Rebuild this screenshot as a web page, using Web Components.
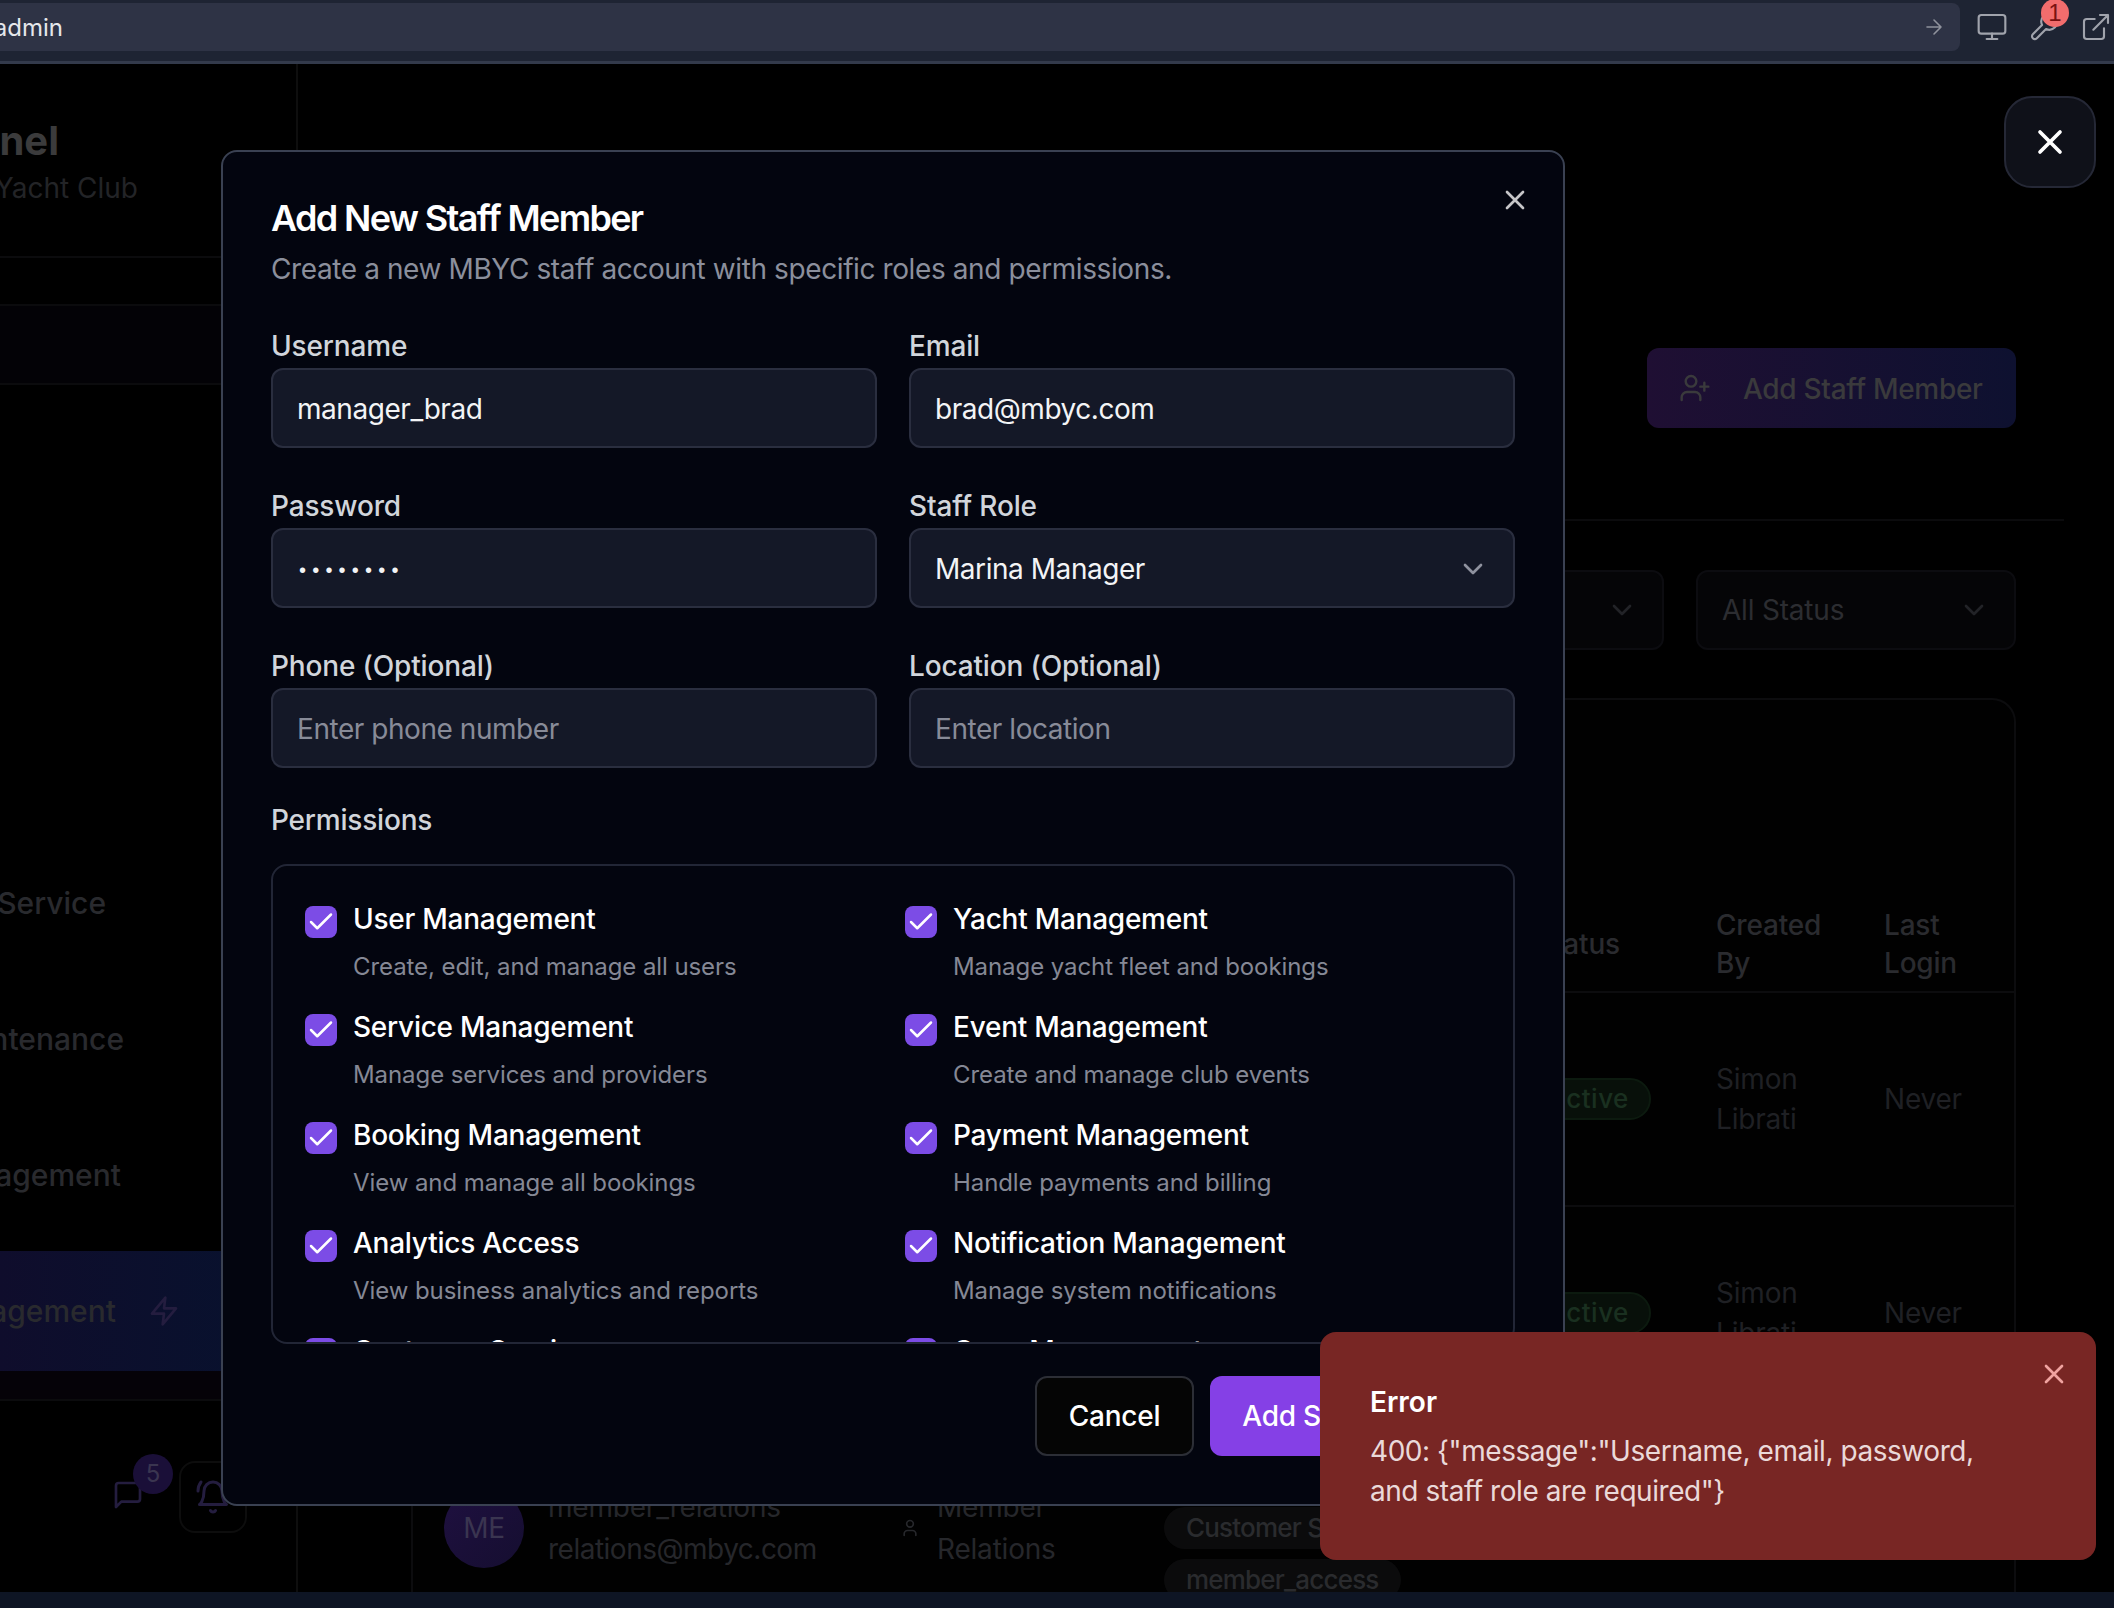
<!DOCTYPE html>
<html><head><meta charset="utf-8"><title>Staff</title>
<style>
html,body{margin:0;padding:0;background:#000;font-family:Inter,"Liberation Sans",sans-serif;-webkit-font-smoothing:antialiased}
</style></head><body>
<x-app></x-app>
<script>
const svg=(size,sw,color,inner)=>`<svg width="${size}" height="${size}" viewBox="0 0 24 24" fill="none" stroke="${color}" stroke-width="${sw}" stroke-linecap="round" stroke-linejoin="round" style="display:block;flex:none">${inner}</svg>`;
const I={
 x:'<path d="M18 6 6 18M6 6l12 12"/>',
 check:'<path d="M20 6 9 17l-5-5"/>',
 chev:'<path d="m6 9 6 6 6-6"/>',
 arrow:'<path d="M5 12h14M12 5l7 7-7 7"/>',
 monitor:'<rect x="2" y="3" width="20" height="14" rx="2"/><path d="M8 21h8M12 17v4"/>',
 wrench:'<path d="M14.7 6.3a1 1 0 0 0 0 1.4l1.6 1.6a1 1 0 0 0 1.4 0l3.77-3.77a6 6 0 0 1-7.94 7.94l-6.91 6.91a2.12 2.12 0 0 1-3-3l6.91-6.91a6 6 0 0 1 7.94-7.94l-3.76 3.76z"/>',
 ext:'<path d="M15 3h6v6M10 14 21 3M18 13v6a2 2 0 0 1-2 2H5a2 2 0 0 1-2-2V8a2 2 0 0 1 2-2h6"/>',
 userplus:'<path d="M16 21v-2a4 4 0 0 0-4-4H6a4 4 0 0 0-4 4v2"/><circle cx="9" cy="7" r="4"/><path d="M19 8v6M22 11h-6"/>',
 user:'<path d="M19 21v-2a4 4 0 0 0-4-4H9a4 4 0 0 0-4 4v2"/><circle cx="12" cy="7" r="4"/>',
 zap:'<path d="M13 2 3 14h9l-1 8 10-12h-9l1-8z"/>',
 chat:'<path d="M21 15a2 2 0 0 1-2 2H7l-4 4V5a2 2 0 0 1 2-2h14a2 2 0 0 1 2 2z"/>',
 bell:'<path d="M6 8a6 6 0 0 1 12 0c0 7 3 9 3 9H3s3-2 3-9"/><path d="M10.3 21a1.94 1.94 0 0 0 3.4 0"/><path d="M2 8c0-2.2.7-4.3 2-6M22 8a10 10 0 0 0-2-6"/>'
};
function def(name,html){customElements.define(name,class extends HTMLElement{connectedCallback(){if(this.shadowRoot)return;const r=this.attachShadow({mode:'open'});r.innerHTML=typeof html==='function'?html(this):html;}});}

def('x-chrome',`<style>
:host{display:flex;align-items:flex-start;height:64px;box-sizing:border-box;background:#1e2433;border-bottom:3px solid #333a4b;flex:none}
.bar{width:1960px;height:48px;margin-top:3px;background:#2e3345;border-radius:0 8px 8px 0;display:flex;align-items:center;justify-content:space-between;box-sizing:border-box;padding-right:14px;flex:none}
.u{display:flex;justify-content:flex-end;width:63px;white-space:nowrap;font-size:24px;color:#e5e7eb}
.ic{margin-top:11px;position:relative;flex:none}
.mo{margin-left:16px}.w{margin-left:20px}.e{margin-left:20px}
.badge{position:absolute;left:13px;top:-12px;width:28px;height:28px;border-radius:50%;background:#f26d6d;color:#7a1212;font:24px/28px "Liberation Sans",sans-serif;text-align:center}
</style><div class="bar"><div class="u"><span>admin</span></div>${svg(24,1.6,'#8f929c',I.arrow)}</div>
<div class="ic mo">${svg(32,1.6,'#a0a3ac',I.monitor)}</div>
<div class="ic w">${svg(32,1.6,'#a0a3ac',I.wrench)}<div class="badge">1</div></div>
<div class="ic e">${svg(32,1.6,'#a0a3ac',I.ext)}</div>`);

def('x-nav',(h)=>`<style>
:host{display:flex;align-items:center;height:120px;margin-bottom:16px;box-sizing:border-box;position:relative}
:host([active]){background:linear-gradient(90deg,#0f0d2c,#07122e)}
.t{display:flex;justify-content:flex-end;width:${h.getAttribute('end')}px;white-space:nowrap;font-size:30px;font-weight:500;color:#292a2e;flex:none}
.z{margin-left:32px}
</style><div class="t"><span>${h.getAttribute('label')}</span></div>${h.hasAttribute('active')?`<div class="z">${svg(32,2,'#241d3f',I.zap)}</div>`:''}`);

def('x-sidebar',`<style>
:host{display:flex;flex-direction:column;width:298px;box-sizing:border-box;border-right:2px solid #0e0e0e;flex:none;overflow:hidden}
.head{height:194px;border-bottom:2px solid #0b0b0d;box-sizing:border-box;padding-top:53px}
.r{display:flex;justify-content:flex-end;white-space:nowrap}
.ti{width:59px;font-size:40px;line-height:48px;font-weight:700;color:#3b3b3c}
.su{width:138px;font-size:28px;line-height:40px;margin-top:3px;color:#232427}
.a{height:48px;border-bottom:2px solid #0b0b0d;box-sizing:border-box}
.b{height:79px;background:#030206;border-bottom:2px solid #0b0b0d;box-sizing:border-box;margin-bottom:458px}
.c{height:28px;background:#050208;margin-top:-16px;border-bottom:2px solid #0b0b0d;box-sizing:content-box}
.f{display:flex;justify-content:flex-end;align-items:flex-start;padding:60px 49px 0 0;gap:35px}
.ch{position:relative;margin-top:18px}
.bd{position:absolute;left:21px;top:-25px;width:40px;height:40px;border-radius:50%;background:#1a0f38;color:#3a3550;font-size:24px;line-height:40px;text-align:center}
.bellb{position:relative;width:68px;height:72px;box-sizing:border-box;border:2px solid #0d0d0d;border-radius:16px;display:flex;align-items:center;justify-content:center}
</style>
<div class="head"><div class="r ti"><span>Admin Panel</span></div><div class="r su"><span>Miami Beach Yacht Club</span></div></div>
<div class="a"></div><div class="b"></div>
<x-nav end="106" label="Customer Service"></x-nav>
<x-nav end="124" label="Yacht Maintenance"></x-nav>
<x-nav end="121" label="Event Management"></x-nav>
<x-nav end="116" label="Staff Management" active></x-nav>
<div class="c"></div>
<div class="f"><div class="ch">${svg(32,2,'#241d3f',I.chat)}<div class="bd">5</div></div>
<div class="bellb">${svg(36,2,'#241d3f',I.bell)}</div></div>`);

def('x-main',`<style>
:host{display:block;flex:1;min-width:0;padding:0 50px 0 113px;overflow:hidden;font-size:28px;letter-spacing:-.2px}
.hd{height:457px;box-sizing:border-box;border-bottom:2px solid #0b0b0d;padding:284px 48px 0 0;display:flex;justify-content:flex-end;width:1653px}
.add{width:369px;height:80px;border-radius:12px;background:linear-gradient(90deg,#1f0f33,#0e1130);display:flex;align-items:center;box-sizing:border-box;padding-left:32px;color:#3a3a3c;font-weight:500;white-space:nowrap;letter-spacing:-.3px}
.add span{margin-left:32px;padding-top:1px}
.fi{display:flex;justify-content:flex-end;gap:32px;margin-top:49px;width:1605px}
.s{width:320px;height:80px;box-sizing:border-box;border:2px solid #0c0c10;border-radius:12px;background:#050507;display:flex;align-items:center;justify-content:space-between;padding:0 24px 0 24px;color:#2c2d31}
.card{margin-top:48px;width:1605px;box-sizing:border-box;border:2px solid #0c0c0e;border-bottom:0;border-radius:24px 24px 0 0;height:894px;overflow:hidden;background:#010101}
.g{display:grid;grid-template-columns:487px 264px 368px 184px 168px 128px;color:#26272b}
.th{height:291px;border-bottom:2px solid #0c0c0e;color:#2a2b2f;font-weight:500;align-items:end;line-height:38px}
.th div{padding-bottom:9px}
.st{height:76px;line-height:76px;padding-left:4px}
.row{height:212px;border-bottom:2px solid #0c0c0e;align-items:center;line-height:40px;color:#1f2024}
.bdg{display:inline-flex;align-items:center;height:42px;box-sizing:border-box;padding:0 20px;border:2px solid #0c1a0f;background:#08100a;border-radius:21px;font-size:26px;font-weight:500;color:#1a3020;letter-spacing:.5px;margin-left:-3px}
.row3{height:214px;align-items:center;line-height:42px;color:#26272b}
.who{display:flex;align-items:center;padding-left:31px;gap:24px}
.av{width:80px;height:80px;border-radius:50%;background:linear-gradient(135deg,#1f1040,#150e30);color:#3a3550;display:flex;align-items:center;justify-content:center;flex:none}
.nm{white-space:nowrap}
.mail{letter-spacing:-.5px}
.rl{display:flex;align-items:center;gap:17px}
.pl{align-self:start;padding-top:86px;display:flex;flex-direction:column;align-items:flex-start;gap:10px}
.pill{height:42px;line-height:42px;padding:0 22px;border-radius:21px;background:#0b0b0c;color:#2a2b2e;font-size:26px;font-weight:500;white-space:nowrap;letter-spacing:-.8px}
</style>
<div class="hd"><div class="add">${svg(32,1.8,'#3a3a3c',I.userplus)}<span>Add Staff Member</span></div></div>
<div class="fi"><div class="s"><span>All Roles</span>${svg(32,2,'#222327',I.chev)}</div><div class="s"><span>All Status</span>${svg(32,2,'#222327',I.chev)}</div></div>
<div class="card">
<div class="g th"><div></div><div></div><div></div><div class="st">Status</div><div>Created<br>By</div><div>Last<br>Login</div></div>
<div class="g row"><div></div><div></div><div></div><div><span class="bdg">active</span></div><div>Simon<br>Librati</div><div>Never</div></div>
<div class="g row"><div></div><div></div><div></div><div><span class="bdg">active</span></div><div>Simon<br>Librati</div><div>Never</div></div>
<div class="g row3"><div class="who"><div class="av">ME</div><div class="nm">member_relations<br><span class="mail">relations@mbyc.com</span></div></div>
<div class="rl">${svg(20,2,'#26272b',I.user)}<div>Member<br>Relations</div></div>
<div class="pl"><div class="pill">Customer Support</div><div class="pill">member_access</div></div><div></div><div></div><div></div></div>
</div>`);

def('x-field',(h)=>{const sel=h.hasAttribute('select');const ph=h.hasAttribute('ph');return `<style>
:host{display:block}
.l{display:block;font-size:28px;line-height:40px;font-weight:450;color:#d1d5db;padding-top:6px;margin-bottom:2px;letter-spacing:-.15px}
.i{height:80px;box-sizing:border-box;border:2px solid #2a2e3f;border-radius:12px;background:#141827;display:flex;align-items:center;justify-content:space-between;padding:2px 24px 0 24px;font-size:28px;letter-spacing:-.45px;color:${ph?'#888b98':'#f3f4f6'}}
.dots{letter-spacing:6.2px;font-size:20px;padding-left:2px;padding-top:3px;font-family:"Liberation Sans",sans-serif}
</style><div class="l">${h.getAttribute('label')}</div><div class="i"><span class="${h.hasAttribute('pw')?'dots':''}">${h.getAttribute('value')}</span>${sel?svg(32,2,'#8f929f',I.chev):''}</div>`});

def('x-perm',(h)=>`<style>
:host{display:flex;gap:16px;align-items:flex-start}
.c{width:32px;height:32px;border-radius:8px;background:#7c4ce6;margin-top:8px;display:flex;align-items:center;justify-content:center;flex:none}
.t{font-size:28px;line-height:40px;font-weight:450;color:#fff;white-space:nowrap;letter-spacing:-.25px;padding-top:1px}
.d{font-size:24px;line-height:32px;margin-top:12px;color:#858895;white-space:nowrap;letter-spacing:-.08px}
</style><div class="c">${svg(30,2,'#fff',I.check)}</div><div><div class="t">${h.getAttribute('t')}</div><div class="d">${h.getAttribute('d')}</div></div>`);

def('x-modal',`<style>
:host{position:absolute;left:221px;top:150px;width:1344px;box-sizing:border-box;border:2px solid #3a4152;border-radius:16px;background:#03050f;padding:48px;display:block}
h2{margin:0;font-size:36px;line-height:36px;font-weight:600;letter-spacing:-1.65px;color:#fff}
p{margin:12px 0 32px;font-size:28px;line-height:40px;color:#8b8f9c;letter-spacing:-.4px;padding-top:1px;height:39px}
.x{position:absolute;right:32px;top:32px}
.g{display:grid;grid-template-columns:1fr 1fr;gap:32px}
.pl{font-size:28px;line-height:40px;font-weight:450;color:#d1d5db;margin-top:32px;letter-spacing:-.2px}
.box{margin-top:24px;height:480px;box-sizing:border-box;border:2px solid #222636;border-radius:16px;padding:32px;overflow:hidden;display:grid;grid-template-columns:1fr 1fr;column-gap:24px;row-gap:23px;align-content:start}
.ft{display:flex;justify-content:flex-end;gap:16px;margin-top:32px}
.b{height:80px;box-sizing:border-box;border-radius:12px;display:flex;align-items:center;justify-content:center;font-size:28px;font-weight:450;color:#fff;white-space:nowrap;letter-spacing:-.25px}
.can{width:159px;background:#050505;border:2px solid #2c2e36}
.sv{width:305px;background:#8540e6}
</style>
<h2>Add New Staff Member</h2>
<p>Create a new MBYC staff account with specific roles and permissions.</p>
<div class="x">${svg(32,2,'#c6c6c8',I.x)}</div>
<div class="g">
<x-field label="Username" value="manager_brad"></x-field>
<x-field label="Email" value="brad@mbyc.com"></x-field>
<x-field label="Password" value="••••••••" pw></x-field>
<x-field label="Staff Role" value="Marina Manager" select></x-field>
<x-field label="Phone (Optional)" value="Enter phone number" ph></x-field>
<x-field label="Location (Optional)" value="Enter location" ph></x-field>
</div>
<div class="pl">Permissions</div>
<div class="box">
<x-perm t="User Management" d="Create, edit, and manage all users"></x-perm>
<x-perm t="Yacht Management" d="Manage yacht fleet and bookings"></x-perm>
<x-perm t="Service Management" d="Manage services and providers"></x-perm>
<x-perm t="Event Management" d="Create and manage club events"></x-perm>
<x-perm t="Booking Management" d="View and manage all bookings"></x-perm>
<x-perm t="Payment Management" d="Handle payments and billing"></x-perm>
<x-perm t="Analytics Access" d="View business analytics and reports"></x-perm>
<x-perm t="Notification Management" d="Manage system notifications"></x-perm>
<x-perm t="Customer Service" d="Handle customer inquiries"></x-perm>
<x-perm t="Crew Management" d="Manage crew assignments"></x-perm>
</div>
<div class="ft"><div class="b can">Cancel</div><div class="b sv">Add Staff Member</div></div>`);

def('x-toast',`<style>
:host{position:absolute;left:1320px;top:1332px;width:776px;height:228px;box-sizing:border-box;background:#782624;border-radius:16px;padding:50px 50px 0;display:block}
.t{font-size:28px;line-height:40px;font-weight:600;color:#fff}
.m{font-size:28px;line-height:40px;margin-top:9px;color:#ead9d9;width:640px;letter-spacing:-.45px}
.x{position:absolute;left:718px;top:26px}
</style><div class="t">Error</div><div class="m">400: {"message":"Username, email, password, and staff role are required"}</div>
<div class="x">${svg(32,2,'#f0a3a0',I.x)}</div>`);

def('x-close',`<style>
:host{position:absolute;left:2004px;top:96px;width:92px;height:92px;box-sizing:border-box;background:#0f1119;border:2px solid #252836;border-radius:28px;display:flex;align-items:center;justify-content:center}
</style>${svg(40,2.2,'#fff',I.x)}`);

def('x-app',`<style>
:host{display:flex;flex-direction:column;width:2114px;height:1608px;position:relative;overflow:hidden;background:#000}
.view{flex:1;min-height:0;display:flex;overflow:hidden}
.strip{height:16px;background:#0e1524;flex:none}
</style>
<x-chrome></x-chrome>
<div class="view"><x-sidebar></x-sidebar><x-main></x-main></div>
<div class="strip"></div>
<x-modal></x-modal><x-toast></x-toast><x-close></x-close>`);
</script></body></html>
